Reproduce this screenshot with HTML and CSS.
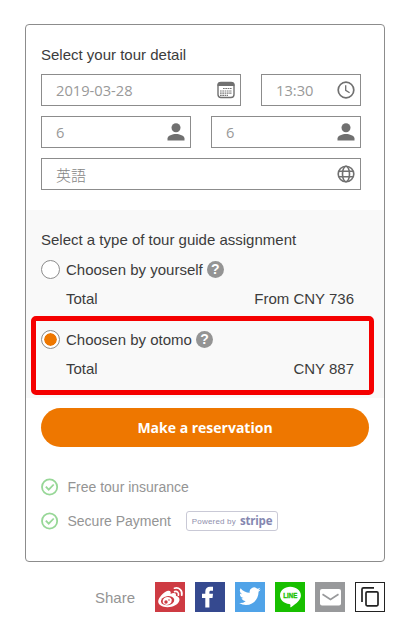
FILE: index.html
```html
<!DOCTYPE html>
<html lang="en">
<head>
    <meta charset="UTF-8">
    <title>Tour reservation</title>
    <link rel="stylesheet" href="styles.css">
</head>

<body>
    <div class="card">
        <div class="detail">
            <h2>Select your tour detail</h2>
            <div class="row">
                <div class="field date">
                    <span>2019-03-28</span>
                    <svg width="18" height="18" viewBox="0 0 18 18">
                        <rect x="1" y="1.5" width="16" height="15" rx="3" fill="#fff" stroke="#707070" stroke-width="1.4"/>
                        <path d="M.5 5V4a3 3 0 0 1 3-3h11a3 3 0 0 1 3 3v1z" fill="#707070"/>
                        <path d="M6 7.5h9M3 10h12M3 12.2h12M3 14.4h8" stroke="#777" stroke-width="1.2" stroke-dasharray="1.7 .6"/>
                    </svg>
                </div>
                <div class="field time">
                    <span>13:30</span>
                    <svg width="18" height="18" viewBox="0 0 18 18" fill="none" stroke="#707070">
                        <circle cx="9" cy="9" r="7.8" stroke-width="1.7"/>
                        <path d="M8.7 4.3v5l3.9 2.4" stroke-width="1.3"/>
                    </svg>
                </div>
            </div>
            <div class="row">
                <div class="field">
                    <span>6</span>
                    <svg width="18" height="18" viewBox="0 0 18 18" fill="#707070">
                        <circle cx="9" cy="4.8" r="4.5"/>
                        <path d="M.5 17.5v-2c0-3 5.2-4.500 8.500-4.500s8.500 1.500 8.500 4.500v2z"/>
                    </svg>
                </div>
                <div class="field">
                    <span>6</span>
                    <svg width="18" height="18" viewBox="0 0 18 18" fill="#707070">
                        <circle cx="9" cy="4.8" r="4.5"/>
                        <path d="M.5 17.5v-2c0-3 5.2-4.500 8.500-4.500s8.500 1.500 8.500 4.500v2z"/>
                    </svg>
                </div>
            </div>
            <div class="row">
                <div class="field">
                    <span class="language">英語</span>
                    <svg width="18" height="18" viewBox="0 0 18 18" fill="none" stroke="#707070" stroke-width="1.6">
                        <circle cx="9" cy="9" r="7.8"/>
                        <ellipse cx="9" cy="9" rx="3.5" ry="7.8"/>
                        <path d="M2 6.2h14M2 11.8h14"/>
                    </svg>
                </div>
            </div>
        </div>

        <div class="guide">
            <h2>Select a type of tour guide assignment</h2>
            <div class="option">
                <div class="choice">
                    <span class="radio"></span>
                    <span>Choosen by yourself</span>
                    <span class="help">?</span>
                </div>
                <div class="total">
                    <span>Total</span>
                    <span>From CNY 736</span>
                </div>
            </div>
            <div class="option selected">
                <div class="choice">
                    <span class="radio checked"></span>
                    <span>Choosen by otomo</span>
                    <span class="help">?</span>
                </div>
                <div class="total">
                    <span>Total</span>
                    <span>CNY 887</span>
                </div>
            </div>
        </div>

        <button class="reserve" type="button">Make a reservation</button>

        <div class="benefits">
            <div class="benefit">
                <svg width="18" height="18" viewBox="0 0 18 18" fill="none" stroke="#97d797" stroke-width="1.8">
                    <circle cx="8.600" cy="9" r="7.600"/>
                    <path d="M4.800 8.700l2.900 3 5-5.200"/>
                </svg>
                <span>Free tour insurance</span>
            </div>
            <div class="benefit">
                <svg width="18" height="18" viewBox="0 0 18 18" fill="none" stroke="#97d797" stroke-width="1.8">
                    <circle cx="8.600" cy="9" r="7.600"/>
                    <path d="M4.800 8.700l2.900 3 5-5.200"/>
                </svg>
                <span>Secure Payment</span>
                <span class="stripe"><small>Powered by</small><b>stripe</b></span>
            </div>
        </div>
    </div>

    <div class="share">
        <span class="share-label">Share</span>
        <a class="weibo">
            <svg width="30" height="30" viewBox="0 0 30 30">
                <path d="M3.2 19.5c0-3.800 5.800-10 9.800-10.800 2.400-.4 3.200 1 2.600 3.200 3-1.300 6-1.200 5.300 1.900 7 1.700 3.600 11.400-8.400 11.400-5.300 0-9.300-2.300-9.300-5.700z" fill="#fff"/>
                <ellipse cx="12.600" cy="18.700" rx="6.700" ry="4.600" transform="rotate(-8 12.600 18.700)" fill="#ce3b43"/>
                <ellipse cx="12.200" cy="18.900" rx="4.600" ry="3.900" transform="rotate(-20 12.200 18.900)" fill="#fff"/>
                <circle cx="11" cy="20" r="1.700" fill="#ce3b43"/>
                <circle cx="14" cy="18" r=".8" fill="#ce3b43"/>
                <path d="M19.500 6.200c4.600-1.200 8.400 2.400 7.200 7M19.600 9.600c2.700-.6 4.400 1.100 3.800 3.600" fill="none" stroke="#fff" stroke-width="1.700" stroke-linecap="round"/>
            </svg>
        </a>
        <a class="facebook">
            <svg width="30" height="30" viewBox="0 0 30 30">
                <path d="M10.300 25.500V16H7v-4.200h3.300V9.600c0-3.300 1.900-4.800 4.800-4.800H18v3.900h-2c-1.300 0-1.600.6-1.600 1.600v1.500H18l-.5 4.200h-3.100v9.500z" fill="#fff"/>
            </svg>
        </a>
        <a class="twitter">
            <svg width="30" height="30" viewBox="0 0 24 24">
                <path transform="translate(3.300 2.700) scale(.72)" d="M23.950 4.570a10 10 0 0 1-2.820.77 4.960 4.960 0 0 0 2.160-2.720c-.95.560-2 .96-3.120 1.180a4.920 4.920 0 0 0-8.380 4.480A13.900 13.900 0 0 1 1.640 3.160a4.920 4.920 0 0 0 1.520 6.570 4.900 4.900 0 0 1-2.230-.61v.06a4.920 4.920 0 0 0 3.950 4.830 5 5 0 0 1-2.210.08 4.940 4.940 0 0 0 4.600 3.420A9.870 9.870 0 0 1 0 19.540a14 14 0 0 0 7.550 2.210c9.050 0 14-7.500 14-13.980 0-.21 0-.42-.02-.63a9.900 9.900 0 0 0 2.420-2.570z" fill="#fff"/>
            </svg>
        </a>
        <a class="line">
            <svg width="30" height="30" viewBox="0 0 30 30">
                <path d="M15.200 4.800c5.900 0 10.700 3.800 10.700 8.600 0 4.100-4.200 7.800-9.900 11.800-.8.500-.8-.2-.6-1.300.2-1.500-.2-1.800-1.200-1.900-5.200-.6-9.200-4.200-9.200-8.600 0-4.800 4.500-8.600 10.200-8.600z" fill="#fff"/>
                <text x="15.300" y="16" text-anchor="middle" textLength="14" lengthAdjust="spacingAndGlyphs">LINE</text>
            </svg>
        </a>
        <a class="mail">
            <svg width="30" height="30" viewBox="0 0 30 30">
                <rect x="5" y="7" width="21" height="16.500" rx="2" fill="#fff"/>
                <path d="M7.500 12.300l8 5.200 8-5.200" fill="none" stroke="#98999b" stroke-width="1.700"/>
            </svg>
        </a>
        <a class="copy">
            <svg width="28" height="28" viewBox="0 0 28 28" fill="none" stroke="#222" stroke-width="1.700">
                <path d="M6 19V6.300a1.500 1.500 0 0 1 1.500-1.500H18"/>
                <rect x="10" y="8.800" width="12" height="14" rx="1.200"/>
            </svg>
        </a>
    </div>
</body>

</html>
```
FILE: styles.css
```css
body {
    font-family: "Liberation Sans", Arial, sans-serif;
    font-size: 15px;
    color: #3c3c3c;
    margin: 0;
    padding: 24px 35px 0 25px;
    background-color: #fff;
}

.card {
    box-sizing: border-box;
    height: 538px;
    border: 1px solid #8c8c8c;
    border-radius: 4px;
}

.card h2 {
    margin: 0;
    font-size: 15px;
    font-weight: normal;
    line-height: 20px;
}

.detail {
    display: flex;
    flex-direction: column;
    gap: 10px;
    padding: 20px 23px 20px 15px;
}

.detail h2 {
    margin-bottom: -1px;
}

.row {
    display: flex;
    gap: 20px;
}

.field {
    box-sizing: border-box;
    display: flex;
    flex: 1;
    align-items: center;
    justify-content: space-between;
    height: 32px;
    padding: 0 5px 0 14px;
    border: 1px solid #8c8c8c;
    font-family: "Open Sans", "Noto Sans", sans-serif;
    font-size: 14.7px;
    color: #999;
}

.field.date {
    flex: 0 0 200px;
}

.field.time {
    flex: 0 0 100px;
}

.language {
    font-family: "Noto Sans CJK JP", sans-serif;
    font-size: 15px;
    font-weight: 300;
    color: #858585;
}

.guide {
    height: 188px;
    box-sizing: border-box;
    padding: 20px 30px 0 15px;
    background-color: #f9f9f9;
}

.option {
    position: relative;
    height: 70px;
}

.choice {
    display: flex;
    align-items: center;
    height: 38px;
    padding-bottom: 2px;
}

.radio {
    box-sizing: border-box;
    width: 19px;
    height: 19px;
    margin-right: 6px;
    border: 1px solid #8c8c8c;
    border-radius: 50%;
    background-color: #fff;
}

.radio.checked {
    background-color: #ee7700;
    background-clip: content-box;
    padding: 2px;
    box-shadow: inset 0 0 0 2px #fff;
}

.help {
    width: 17px;
    height: 17px;
    margin-left: 4px;
    border-radius: 50%;
    background-color: #949494;
    color: #fff;
    font-size: 14px;
    font-weight: bold;
    line-height: 17px;
    text-align: center;
}

.total {
    display: flex;
    justify-content: space-between;
    padding-left: 25px;
    line-height: 18px;
}

/* red frame around the recommended option */
.selected::after {
    content: "";
    position: absolute;
    box-sizing: border-box;
    top: -4px;
    left: -10px;
    width: 343px;
    height: 79px;
    border: 5px solid #f50000;
    border-radius: 5px;
}

.reserve {
    display: block;
    width: 328px;
    height: 39px;
    margin: 10px 0 0 15px;
    padding: 0;
    border: none;
    border-radius: 20px;
    background-color: #ee7700;
    color: #fff;
    font-family: "Open Sans", "Noto Sans", sans-serif;
    font-size: 14px;
    font-weight: bold;
    cursor: pointer;
}

.benefits {
    padding: 23px 15px 0;
    font-size: 14px;
    color: #949494;
}

.benefit {
    display: flex;
    align-items: center;
    height: 34px;
}

.benefit svg {
    margin-right: 8.5px;
}

.stripe {
    box-sizing: border-box;
    display: flex;
    align-items: center;
    justify-content: center;
    gap: 4px;
    width: 92px;
    height: 20px;
    margin-left: 15px;
    border: 1px solid #c9c9d6;
    border-radius: 3px;
    color: #8587b0;
    white-space: nowrap;
}

.stripe small {
    font-size: 8px;
    color: #8f90ad;
    letter-spacing: 0.2px;
}

.stripe b {
    font-family: "Open Sans", sans-serif;
    font-size: 11.5px;
    line-height: 16px;
    letter-spacing: -0.2px;
}

.share {
    display: flex;
    align-items: center;
    justify-content: flex-end;
    gap: 10px;
    margin-top: 20px;
    color: #949494;
}

.share-label {
    margin-right: 10px;
}

.share a {
    width: 30px;
    height: 30px;
}

.share svg {
    display: block;
}

.weibo {
    background-color: #ce3b43;
}

.facebook {
    background-color: #35498f;
}

.twitter {
    background-color: #50a3e8;
}

.line {
    background-color: #18bf00;
}

.line text {
    font-family: "Liberation Sans", Arial, sans-serif;
    font-size: 6.5px;
    font-weight: bold;
    fill: #18bf00;
    stroke: #18bf00;
    stroke-width: 0.3px;
}

.mail {
    background-color: #98999b;
}

.share .copy {
    box-sizing: border-box;
    border: 1px solid #222;
}
```
